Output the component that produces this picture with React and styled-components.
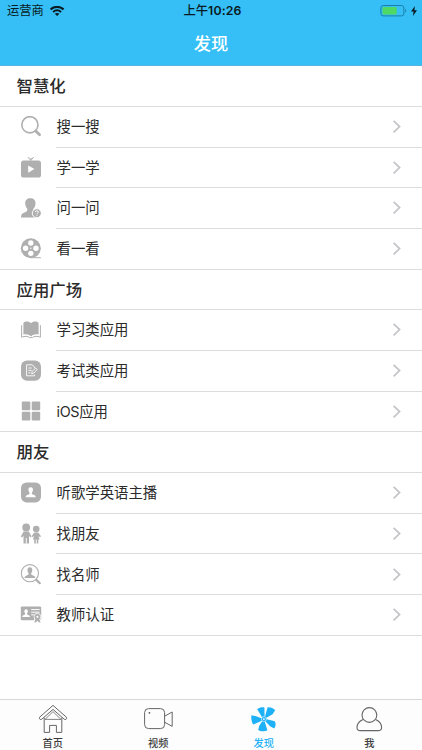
import React from 'react';
import styled, { createGlobalStyle } from 'styled-components';

const GlobalStyle = createGlobalStyle`
  * {
    box-sizing: border-box;
  }
  body {
    margin: 0;
    background: #fff;
    font-family: Inter, 'Noto Sans CJK SC', sans-serif;
  }
`;

const Screen = styled.div`
  width: 422px;
  height: 750px;
  display: flex;
  flex-direction: column;
  overflow: hidden;
  color: #2b2b2b;
`;

const Header = styled.header`
  height: 66px;
  flex: none;
  background: #35bff6;
  border-bottom: 1px solid #56b5df;
`;

const StatusBar = styled.div`
  height: 22px;
  padding: 0 5px 0 7px;
  display: grid;
  grid-template-columns: 1fr auto 1fr;
  align-items: center;
  color: #0a1a22;
  font-size: 12.3px;
  line-height: 22px;
`;

const StatusSide = styled.div`
  display: flex;
  align-items: center;
  justify-content: ${({ $end }) => ($end ? 'flex-end' : 'flex-start')};
  gap: ${({ $end }) => ($end ? '4px' : '6px')};
`;

const Time = styled.span`
  padding-left: 1px;
  font-weight: 500;

  b {
    font-weight: 600;
    letter-spacing: 0.15px;
  }
`;

const Title = styled.h1`
  margin: 0;
  height: 43px;
  line-height: 43px;
  text-align: center;
  color: #fff;
  font-size: 17.2px;
  font-weight: 500;
`;

const List = styled.main`
  flex: 1;
  min-height: 0;
  padding-top: 0.2px;
`;

const SectionTitle = styled.h2`
  margin: 0;
  height: 40.7px;
  padding: 0.2px 0 0 16.6px;
  display: flex;
  align-items: center;
  border-bottom: 1px solid #dcdcdc;
  font-size: 16.4px;
  line-height: 20px;
  font-weight: 500;
`;

const Row = styled.div`
  height: 40.7px;
  display: flex;
  border-bottom: ${({ $last }) => ($last ? '1px solid #dcdcdc' : 'none')};
`;

const IconBox = styled.div`
  width: 56px;
  padding-left: 20px;
  display: flex;
  align-items: center;
  color: #afafaf;
`;

const RowBody = styled.div`
  flex: 1;
  display: flex;
  align-items: center;
  justify-content: space-between;
  padding: 0.6px 20px 0 0.5px;
  border-bottom: ${({ $last }) => ($last ? 'none' : '1px solid #dcdcdc')};
  font-size: 14.4px;
  line-height: 20px;
`;

const Latin = styled.span`
  letter-spacing: -0.35px;
`;

const TabBar = styled.nav`
  height: 51px;
  flex: none;
  display: grid;
  grid-template-columns: repeat(4, 1fr);
  border-top: 1px solid #d8d8d8;
  background: #fdfdfd;
`;

const Tab = styled.div`
  display: flex;
  flex-direction: column;
  align-items: center;
  padding-top: 4px;
  color: ${({ $active }) => ($active ? '#1eb1f8' : '#3c3c3c')};
  font-size: 10.2px;
  line-height: 14px;
  font-weight: 500;

  svg {
    margin-bottom: 2px;
  }
`;

const Glyph = ({ children }) => (
  <svg width="22" height="22" viewBox="0 0 22 22" fill="currentColor">
    {children}
  </svg>
);

const Bust = ({ transform, fill }) => (
  <path
    transform={transform}
    fill={fill}
    d="M5 0C3.2 0 2.6 1.2 2.8 3C2.9 4.2 3.4 5 3.9 5.6C3.9 6.6 3.6 6.9 2.6 7.3C1 7.9 0 8.2 0 10H10C10 8.2 9 7.9 7.4 7.3C6.4 6.9 6.1 6.6 6.1 5.6C6.6 5 7.1 4.2 7.2 3C7.4 1.2 6.8 0 5 0Z"
  />
);

const icons = {
  search: (
    <Glyph>
      <circle cx="9.9" cy="8.8" r="8.1" fill="none" stroke="currentColor" strokeWidth="1.6" />
      <path d="M15.8 15L19.6 18.8" stroke="currentColor" strokeWidth="2.7" strokeLinecap="round" />
    </Glyph>
  ),
  learn: (
    <Glyph>
      <path
        d="M7.8 0L10.8 3.6L13.8 0M9.5 0.8L10.8 2.8L12.2 0.8"
        fill="none"
        stroke="currentColor"
        strokeWidth="0.9"
      />
      <rect x="1" y="3.6" width="20" height="17" rx="2.6" />
      <path d="M8.2 8.4L14.4 12.1L8.2 15.8Z" fill="#fff" />
    </Glyph>
  ),
  ask: (
    <Glyph>
      <path d="M10.4 0.2C7 0.2 5 2.2 5.2 5.6C5.3 8 6.4 9.8 7.4 11C7.4 12.8 6.9 13.5 5 14.3C2.4 15.5 1 16.2 1 19.6H17V11L13.2 12.4V11C14.4 9.8 15.5 8 15.5 5.6C15.7 2.2 13.8 0.2 10.4 0.2Z" />
      <circle cx="16.8" cy="15.2" r="4.5" stroke="#fff" strokeWidth="1" />
      <path
        d="M15.3 14.1C15.3 12.3 18.4 12.3 18.4 14.1C18.4 15.2 16.9 15.2 16.9 16.4M16.9 17.3V18.1"
        fill="none"
        stroke="#fff"
        strokeWidth="1"
      />
    </Glyph>
  ),
  watch: (
    <Glyph>
      <circle cx="10.8" cy="10.2" r="10" />
      <path d="M11 19.7H20.8" stroke="currentColor" strokeWidth="1" />
      <g fill="#fff">
        <circle cx="10.8" cy="5" r="2.7" />
        <circle cx="10.8" cy="15.4" r="2.7" />
        <circle cx="5.6" cy="10.2" r="2.7" />
        <circle cx="16" cy="10.2" r="2.7" />
        <circle cx="10.8" cy="10.2" r="0.7" />
      </g>
    </Glyph>
  ),
  book: (
    <Glyph>
      <path d="M11 3.2C9 1 5 1 3.4 3V14.6C6 13.8 9.2 14.3 11 16.4C12.8 14.3 16 13.8 18.6 14.6V3C17 1 13 1 11 3.2Z" />
      <path
        d="M1.6 5.2V17.2C4.6 16 8 16 9.6 17.6H12.4C14 16 17.4 16 20.4 17.2V5.2"
        fill="none"
        stroke="currentColor"
        strokeWidth="1"
      />
    </Glyph>
  ),
  exam: (
    <Glyph>
      <rect x="1" y="0.5" width="20" height="20.2" rx="6" />
      <g fill="none" stroke="#fff" strokeWidth="0.9">
        <path d="M14.6 8V7L12 4.8H6.6V15.8H14.6V14.6" />
        <path d="M8.4 8H11.8M8.4 10.4H11.6M8.4 12.8H10.4" />
        <path d="M11.6 13.8L12.2 11.6L15.6 8L17.2 9.5L13.8 13.1Z" />
      </g>
    </Glyph>
  ),
  grid: (
    <Glyph>
      <rect x="1.8" y="0.6" width="8.5" height="8.6" rx="1" />
      <rect x="11.7" y="0.6" width="8.5" height="8.6" rx="1" />
      <rect x="1.8" y="10.8" width="8.5" height="8.6" rx="1" />
      <rect x="11.7" y="10.8" width="8.5" height="8.6" rx="1" />
    </Glyph>
  ),
  anchor: (
    <Glyph>
      <rect x="1" y="0.4" width="20" height="20" rx="5.6" />
      <Bust transform="translate(5.7 5.3)" fill="#fff" />
    </Glyph>
  ),
  friends: (
    <Glyph>
      <circle cx="6.2" cy="4.5" r="3.9" />
      <path d="M3.6 8.4H8.8L11.6 13.4L10.2 14.4L9 12.4V20.6H6.7V15H5.8V20.6H3.5V12.4L2.2 14.4L0.8 13.4Z" />
      <circle cx="16.2" cy="6" r="3.3" />
      <path d="M14.2 9.4H18.2L21 13.2L20 14.2L18.5 12.8L19.5 16.6H18.3V20.6H16.7V16.6H15.8V20.6H14.2V16.6H13L14 12.8L12.5 14.2L11.6 13.2Z" />
    </Glyph>
  ),
  teacher: (
    <Glyph>
      <circle cx="9.9" cy="9.2" r="8.6" fill="none" stroke="currentColor" strokeWidth="1.1" />
      <Bust transform="translate(4.5 3.3) scale(1.08)" />
      <path d="M16.3 15.9L19.8 19.2" stroke="currentColor" strokeWidth="2.2" strokeLinecap="round" />
    </Glyph>
  ),
  cert: (
    <Glyph>
      <rect x="0.8" y="2.4" width="20.4" height="13.8" rx="1.2" />
      <Bust transform="translate(2.2 5.2) scale(0.78)" fill="#fff" />
      <path d="M11.2 5.6H19.6M11.2 8.2H19.6M11.2 10.8H14" stroke="#fff" strokeWidth="1" />
      <path d="M14.6 13.6L13.4 19H21.4L20 13.6Z" fill="#fff" />
      <circle cx="17.4" cy="12.8" r="3.4" stroke="#fff" strokeWidth="0.8" />
      <path d="M15.6 14.8L14.2 18.6L16 18.2L17.4 16.8L18.8 18.2L20.6 18.6L19.2 14.8Z" />
      <circle cx="17.4" cy="12.8" r="1.1" fill="#fff" />
    </Glyph>
  ),
};

const Chevron = () => (
  <svg width="10" height="14" viewBox="0 0 10 14" fill="none">
    <path d="M1.6 0.8L7.6 6.6L1.6 12.4" stroke="#c4c4c8" strokeWidth="1.7" />
  </svg>
);

const WifiIcon = () => (
  <svg width="15" height="11" viewBox="0 0 15 11" fill="none" stroke="#0a1a22">
    <path d="M0.6 3.4C4.4 0.1 9.8 0.1 13.6 3.4" strokeWidth="2.2" />
    <path d="M3.1 5.9C5.5 3.9 8.7 3.9 11.1 5.9" strokeWidth="1.9" />
    <path d="M7.1 10L4.8 7.7C6.1 6.6 8.1 6.6 9.4 7.7Z" fill="#0a1a22" stroke="none" />
  </svg>
);

const BatteryIcon = () => (
  <svg width="27" height="12" viewBox="0 0 27 12">
    <rect x="0.9" y="0.5" width="23" height="10.4" rx="2.4" fill="none" stroke="#1b7fa8" />
    <rect x="2.5" y="2" width="14.2" height="7.4" rx="1" fill="#4fd964" />
    <path d="M25.3 3.8V7.8C26.6 7.2 26.6 4.4 25.3 3.8Z" fill="#1b7fa8" />
  </svg>
);

const BoltIcon = () => (
  <svg width="6" height="10" viewBox="0 0 6 10">
    <path d="M3.9 0L0 5.6H2.6L1.9 10L6 4.2H3.4Z" fill="#0a1a22" />
  </svg>
);

const HomeIcon = () => (
  <svg width="30" height="30" viewBox="0 0 30 30" fill="none" stroke="#666" strokeWidth="1">
    <path
      d="M15 1.4L28.4 13.2C29.2 15 27.6 16.2 26.2 15.2L15 5.4L3.8 15.2C2.4 16.2 0.8 15 1.6 13.2Z"
      strokeLinejoin="round"
    />
    <path d="M6.2 13.6V28.4H11.6V21.4H18.4V28.4H23.8V13.6" strokeLinejoin="round" />
    <path d="M7 15.4H23L15 7.6Z" strokeWidth="0.8" />
  </svg>
);

const VideoIcon = () => (
  <svg width="30" height="30" viewBox="0 0 30 30" fill="none" stroke="#666" strokeWidth="1">
    <rect x="1.6" y="4.6" width="20" height="20" rx="4" />
    <path d="M21.6 12.2L29.2 8V22.4L21.6 18.2" strokeLinejoin="round" />
    <circle cx="6.4" cy="8.8" r="0.9" fill="#555" stroke="none" />
  </svg>
);

const FanIcon = () => (
  <svg width="30" height="30" viewBox="0 0 30 30" fill="#1eb1f8">
    <path d="M13.2 13.6L8.2 5.2C10.2 3.6 12.8 3.1 15.4 3.4L15.6 13Z" />
    <path d="M15.8 13.2L18.6 3.2C21.6 3 24.4 4 26.2 6.2L23.6 10.2L16.6 14.2Z" />
    <path d="M16.8 15L25.8 17.2C27 19.6 26.8 22.2 25.2 24.6L21.4 22.6L15.8 16.8Z" />
    <path d="M15.4 16.4L18.4 26.2C15.6 27.6 11 27.8 9.2 25.8L10.2 22L13.6 16.4Z" />
    <path d="M13.4 16.6L4.2 20.6C2.6 17.8 2 14.6 2.4 11.2L7.2 12.2L13 14.4Z" />
    <circle cx="14.9" cy="15.1" r="2.5" stroke="#bfe9fd" strokeWidth="0.8" />
    <circle cx="14.9" cy="15.1" r="0.9" fill="#fff" />
  </svg>
);

const MeIcon = () => (
  <svg width="30" height="30" viewBox="0 0 30 30" fill="none" stroke="#666" strokeWidth="1.1">
    <circle cx="15.4" cy="11" r="7.4" />
    <path d="M9 15.4C5.4 17 3 20.2 3 23.4C3 25.6 4.2 26.6 6.4 26.6H24C26.2 26.6 27.6 25.6 27.6 23.4C27.6 20.2 25.2 17 21.6 15.4" />
  </svg>
);

const sections = [
  {
    title: '智慧化',
    rows: [
      { icon: 'search', label: '搜一搜' },
      { icon: 'learn', label: '学一学' },
      { icon: 'ask', label: '问一问' },
      { icon: 'watch', label: '看一看' },
    ],
  },
  {
    title: '应用广场',
    rows: [
      { icon: 'book', label: '学习类应用' },
      { icon: 'exam', label: '考试类应用' },
      { icon: 'grid', prefix: 'iOS', label: '应用' },
    ],
  },
  {
    title: '朋友',
    rows: [
      { icon: 'anchor', label: '听歌学英语主播' },
      { icon: 'friends', label: '找朋友' },
      { icon: 'teacher', label: '找名师' },
      { icon: 'cert', label: '教师认证' },
    ],
  },
];

const tabs = [
  { label: '首页', Icon: HomeIcon },
  { label: '视频', Icon: VideoIcon },
  { label: '发现', Icon: FanIcon, active: true },
  { label: '我', Icon: MeIcon },
];

const App = () => (
  <Screen>
    <GlobalStyle />
    <Header>
      <StatusBar>
        <StatusSide>
          运营商
          <WifiIcon />
        </StatusSide>
        <Time>
          上午<b>10:26</b>
        </Time>
        <StatusSide $end>
          <BatteryIcon />
          <BoltIcon />
        </StatusSide>
      </StatusBar>
      <Title>发现</Title>
    </Header>
    <List>
      {sections.map(({ title, rows }) => (
        <section key={title}>
          <SectionTitle>{title}</SectionTitle>
          {rows.map(({ icon, prefix, label }, i) => {
            const last = i === rows.length - 1;
            return (
              <Row key={label} $last={last}>
                <IconBox>{icons[icon]}</IconBox>
                <RowBody $last={last}>
                  <span>
                    {prefix && <Latin>{prefix}</Latin>}
                    {label}
                  </span>
                  <Chevron />
                </RowBody>
              </Row>
            );
          })}
        </section>
      ))}
    </List>
    <TabBar>
      {tabs.map(({ label, Icon, active }) => (
        <Tab key={label} $active={active}>
          <Icon />
          {label}
        </Tab>
      ))}
    </TabBar>
  </Screen>
);

export default App;
